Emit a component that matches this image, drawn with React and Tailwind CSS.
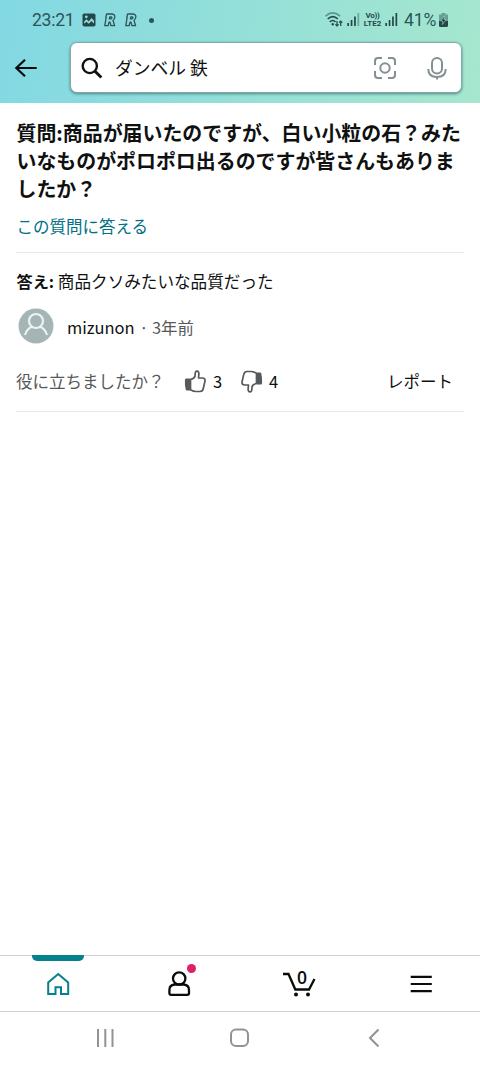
const RIcon = () => (
  <svg width="12" height="14" viewBox="0 0 12 14" fill="none" stroke="#2c5558" strokeWidth="1.3" strokeLinejoin="round">
    <path d="M2.6 1H8q3.2.3 2.8 3.2Q10.600 6.400 9 7.300L10.600 12.700H7L6 9.200H5L4.200 12.700H.8L2.200 4.200H1.800Z" />
    <path d="M5.800 4H7.200q.9.100.7.900-.2.900-1.100.9H5.400Z" />
  </svg>
);

const Signal = ({ weak }) => (
  <svg width="13" height="15" viewBox="0 0 13 15" fill="#24484a">
    <rect x="0.300" y="11" width="1.700" height="3" />
    <rect x="3.700" y="8" width="1.700" height="6" />
    <rect x="7.100" y="4.500" width="1.700" height="9.500" />
    <rect x="10.500" y="1" width="1.700" height="13" opacity={weak ? 0.4 : 1} />
  </svg>
);

const StatusBar = () => (
  <div className="flex h-10 items-center pl-8 font-[Roboto] text-[#2c5558]">
    <span className="w-[50px] text-[17.6px] tracking-[-0.3px]">23:21</span>
    <svg className="mr-[8px]" width="14" height="14" viewBox="0 0 14 14">
      <rect x=".5" y=".5" width="13" height="13" rx="1.800" fill="#24484a" />
      <path fill="#93dedd" d="M2.200 8.500L4.500 6.200 6.700 8.400 9.500 5 12 7.800V10.500L9.500 8 6.700 10.800 4.500 8.800 2.200 10.800Z" />
      <circle cx="4.300" cy="3.800" r="1.400" fill="#93dedd" />
    </svg>
    <RIcon />
    <span className="w-[9px]" />
    <RIcon />
    <span className="ml-[12px] size-[5px] rounded-full bg-[#2c5558]" />
    <div className="ml-auto flex items-center pr-[31px]">
      <svg width="19" height="17" viewBox="0 0 19 17" fill="none" stroke="#24484a" strokeWidth="1.600">
        <path d="M.5 5.200Q7.800-1.300 15 5.200" opacity=".5" />
        <path d="M2.700 8Q7.800 3.300 12.800 8" />
        <path d="M4.800 10.800Q7.800 8.200 10.500 10.800" />
        <circle cx="7.800" cy="13.300" r="1.200" fill="#24484a" stroke="none" />
        <path d="M12 10V15M10.400 13.400L12 15 13.600 13.400M15.700 15V10M14.100 11.600L15.700 10 17.300 11.600" strokeWidth="1.200" />
      </svg>
      <span className="w-[3px]" />
      <Signal weak />
      <div className="ml-[3px] mr-[3px] flex w-[19px] flex-col items-center text-[8px] leading-[9px] font-bold text-[#24484a]">
        <span className="tracking-[-0.300px]">Vo))</span>
        <span className="-mt-[1px]">LTE2</span>
      </div>
      <Signal />
      <span className="ml-[6px] w-[34px] text-[17.600px] tracking-[-0.200px]">41%</span>
      <svg width="11" height="16" viewBox="0 0 11 16">
        <path d="M3.500 1H7.500V2.500H10V9H1V2.500H3.500Z" fill="#24484a" opacity=".45" />
        <path d="M1 9H10V13.500Q10 15 8.500 15H2.500Q1 15 1 13.500Z" fill="#24484a" />
        <path d="M6.400 3.800L2.900 9H5L4.400 12.500 8.200 7.500H5.900Z" fill="#173638" stroke="#a0e3d4" strokeWidth=".6" />
      </svg>
    </div>
  </div>
);

const SearchBar = () => (
  <div className="flex pt-[2px] pl-[14px]">
    <svg className="mt-[15px] shrink-0" width="24" height="22" viewBox="0 0 24 22" fill="none" stroke="#090d0e" strokeWidth="2.200">
      <path d="M22.700 11H2.500M11 2.800L2.300 11 11 19.200" />
    </svg>
    <div className="ml-[32px] flex h-[51px] w-[392px] items-center rounded-[7px] border border-[#83aaa9] bg-white shadow-[0_1px_3px_#4d8583]">
      <svg className="ml-[10px] shrink-0" width="22" height="22" viewBox="0 0 22 22" fill="none" stroke="#111" strokeWidth="2.400">
        <circle cx="8.800" cy="9" r="7.100" />
        <path d="M14 14.300L20.300 20.500" strokeWidth="3" />
      </svg>
      <span className="ml-[12px] text-[17.800px] leading-none">ダンベル 鉄</span>
      <svg className="ml-auto" width="22" height="22" viewBox="0 0 22 22" fill="none" stroke="#859092" strokeWidth="2">
        <path d="M1 8V4Q1 1 4 1H8M14 1H18Q21 1 21 4V8M21 14V18Q21 21 18 21H14M8 21H4Q1 21 1 18V14" />
        <circle cx="11" cy="11" r="4.700" />
      </svg>
      <svg className="ml-[31px] mr-[14px]" width="20" height="24" viewBox="0 0 20 24" fill="none" stroke="#859092" strokeWidth="2">
        <rect x="5" y="2" width="10" height="15.500" rx="5" />
        <path d="M1.300 13Q1.300 21 10 21T18.700 13M10 21V23.500" />
      </svg>
    </div>
  </div>
);

const Thumb = ({ down }) => (
  <svg className={down ? "rotate-180" : ""} width="22" height="23" viewBox="0 0 22 23">
    <path d="M6.500 9.500Q10.500 8.500 11 6L11.300 2.700Q11.700.900 13.200 1.100T14.900 3.800L14.500 8H18.500Q21.300 8.200 21 11L19.300 18.500Q18.800 21.300 16 21.500H12Q9.500 21.500 6.500 19.700Z" fill="#fff" stroke="#565a5b" strokeWidth="1.700" strokeLinejoin="round" />
    <path d="M2 8.500H5.500Q7 8.500 7 10V19Q7 20.500 5.500 20.500H2.700Q1.900 20.500 1.700 19.500Q.600 14.500 .9 10 1.100 8.500 2 8.500Z" fill="#565a5b" />
  </svg>
);

const Answer = () => (
  <section>
    <p className="mt-[16px] pl-[0.500px] text-[16.600px] leading-6">
      <b className="text-[16.200px]">答え:</b> 商品クソみたいな品質だった
    </p>
    <div className="mt-[15px] flex h-9 items-center">
      <svg className="ml-[2px]" width="36" height="36" viewBox="0 0 36 36">
        <circle cx="18" cy="18" r="17.500" fill="#a5b5b5" />
        <g fill="none" stroke="#edf2f2" strokeWidth="2.200">
          <circle cx="18" cy="13" r="7" />
          <path d="M7 27Q9 20.500 14 18.800M22 18.800Q27 20.500 29 27" />
        </g>
      </svg>
      <span className="ml-[13px] pt-[3px] text-[16.500px]">mizunon</span>
      <span className="ml-[4.500px] pt-[3px] text-[16.400px] text-[#565959]">· 3年前</span>
    </div>
    <div className="mt-[24px] flex h-[26px] items-center text-[16.500px]">
      <span className="w-[168px] text-[#565959]">役に立ちましたか？</span>
      <Thumb />
      <span className="ml-[7px] w-[28px]">3</span>
      <Thumb down />
      <span className="ml-[6px]">4</span>
      <span className="mr-[11px] ml-auto">レポート</span>
    </div>
    <div className="mt-[17px] border-t border-[#e7e7e7]" />
  </section>
);

const TabBar = () => (
  <nav className="relative flex h-[57px] items-center gap-[87px] border-y border-[#cdd3d3] pl-[41px]">
    <span className="absolute -top-px left-8 h-[6px] w-[52px] rounded-b-[5px] bg-[#05808d]" />
    <svg width="34" height="30" viewBox="0 0 34 30" fill="none" stroke="#05808d" strokeWidth="2">
      <path d="M7.200 25V13.500L17.200 5 27.200 13.500V25H20V18.300H14.500V25Z" />
    </svg>
    <div className="relative">
      <svg width="34" height="30" viewBox="0 0 34 30" fill="none" stroke="#090b0c" strokeWidth="2.300">
        <circle cx="17.200" cy="9.500" r="6.200" />
        <path d="M12.500 15.500Q7.400 16 7.400 21V24Q7.400 25.800 9.200 25.800H25.200Q27 25.800 27 24V21Q27 16 21.900 15.500Z" />
      </svg>
      <span className="absolute -top-[5px] left-[25px] size-[9px] rounded-full bg-[#df1f67]" />
    </div>
    <div className="relative">
      <svg width="34" height="30" viewBox="0 0 34 30" fill="none" stroke="#090b0c" strokeWidth="2.300">
        <path d="M0 5H5.500L12.300 20.500H26L31.500 10" />
        <circle cx="13" cy="25.500" r="2" fill="#090b0c" stroke="none" />
        <circle cx="25" cy="25.500" r="2" fill="#090b0c" stroke="none" />
      </svg>
      <span className="absolute -top-px left-[14px] font-['Open_Sans'] text-[17.500px] leading-[18px] font-semibold text-[#090b0c]">0</span>
    </div>
    <svg width="34" height="30" viewBox="0 0 34 30" stroke="#090b0c" strokeWidth="2.200">
      <path d="M6.700 7.800H27.800M6.700 15H27.800M6.700 22.200H27.800" />
    </svg>
  </nav>
);

const SystemNav = () => (
  <div className="flex h-[55px] items-center gap-[110px] pb-[4px] pl-[93px]">
    <svg width="24" height="22" viewBox="0 0 24 22" stroke="#929292" strokeWidth="2">
      <path d="M5 2V20M12.300 2V20M19.500 2V20" />
    </svg>
    <svg width="24" height="22" viewBox="0 0 24 22" fill="none" stroke="#929292" strokeWidth="2">
      <rect x="4" y="2.500" width="17" height="16.500" rx="5" />
    </svg>
    <svg width="24" height="22" viewBox="0 0 24 22" fill="none" stroke="#929292" strokeWidth="2">
      <path d="M17.500 2.500L9 11 17.500 19.500" />
    </svg>
  </div>
);

export default function App() {
  return (
    <div className="flex h-[1067px] w-[480px] flex-col overflow-hidden bg-white font-['Noto_Sans_CJK_JP',sans-serif] text-[#0f1111]">
      <header className="h-[103px] bg-[linear-gradient(100deg,#82d8e3,#a6e7ce)]">
        <StatusBar />
        <SearchBar />
      </header>
      <main className="flex-1 px-[16px] pt-[16px]">
        <h1 className="pl-[0.500px] text-[19.930px] leading-[28px] font-bold whitespace-nowrap">
          質問:商品が届いたのですが、白い小粒の石？みた
          <br />
          いなものがポロポロ出るのですが皆さんもありま
          <br />
          したか？
        </h1>
        <a className="mt-[11px] block pl-[0.500px] text-[16.500px] leading-6 text-[#007185]">この質問に答える</a>
        <div className="mt-[14px] border-t border-[#e7e7e7]" />
        <Answer />
      </main>
      <TabBar />
      <SystemNav />
    </div>
  );
}
